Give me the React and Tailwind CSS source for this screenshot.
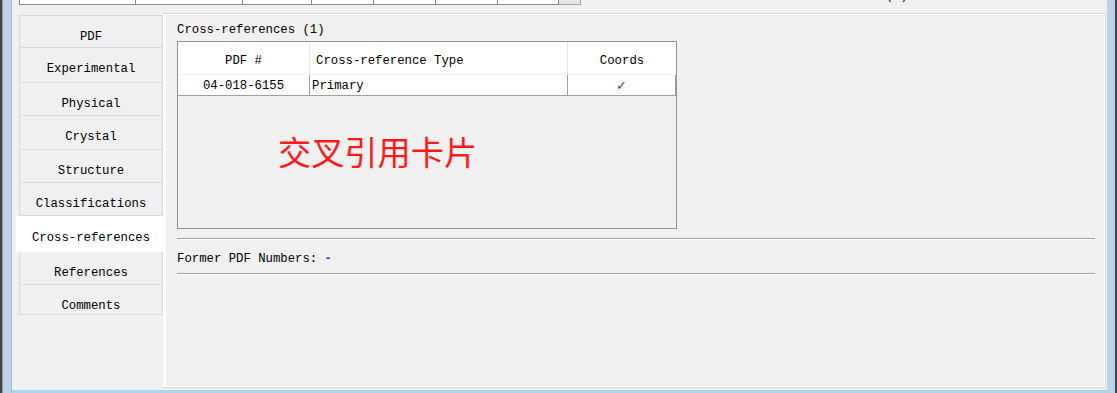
import React from "react";

const mono = { fontFamily: '"Liberation Mono", "DejaVu Sans Mono", monospace' };

const tabs = [
  { label: "PDF", h: "h-[33px]" },
  { label: "Experimental", h: "h-[35px]" },
  { label: "Physical", h: "h-[33px]" },
  { label: "Crystal", h: "h-[34px]" },
  { label: "Structure", h: "h-[33px]" },
  { label: "Classifications", h: "h-[33px]" },
  { label: "Cross-references", h: "h-[36px]", active: true },
  { label: "References", h: "h-[33px]" },
  { label: "Comments", h: "h-[30px]" },
];

const topCells = [
  { w: "w-[116px]", t: "27.006" },
  { w: "w-[107px]", t: "2.89660" },
  { w: "w-[69px]", t: "0" },
  { w: "w-[62px]", t: "1" },
  { w: "w-[62px]", t: "1" },
  { w: "w-[62px]", t: "1" },
  { w: "w-[61px]", t: "" },
];

export default function App() {
  return (
    <div
      className="w-[1117px] h-[393px] flex bg-[#f0f0f0] overflow-hidden text-black"
      style={mono}
    >
      {/* left window frame */}
      <div className="w-[2px] h-full bg-[#444444]" />
      <div className="w-[1px] h-full bg-[#9a9a9a]" />
      <div className="w-[8px] h-full bg-[#bcd3ea]" />
      <div className="w-[1px] h-full bg-[#a9bfd6]" />

      {/* main column */}
      <div className="flex-1 flex flex-col min-w-0">
        {/* clipped top table strip */}
        <div className="h-[13px] flex items-start pl-[7px] relative">
          <div className="flex h-[5px] border-l border-b border-[#8a8a8a] bg-white overflow-hidden">
            {topCells.map((c, i) => (
              <div
                key={i}
                className={`${c.w} h-full border-r border-[#8a8a8a] flex justify-end pr-[4px] overflow-hidden`}
              >
                <span className="text-[12.3px] leading-[14px] -mt-[11px] text-[#222]">{c.t}</span>
              </div>
            ))}
          </div>
          <div className="w-[22px] h-[5px] border-r border-b border-[#a8a8a8] bg-[#e6e6e6]" />
          <div className="flex-1" />
          <div className="w-[260px] h-[5px] overflow-hidden">
            <span className="block text-[12.3px] leading-[14px] -mt-[11px] text-[#222] pl-[24px]">
              2θ(°)
            </span>
          </div>
        </div>

        {/* tab control */}
        <div className="flex-1 flex pl-[7px] min-h-0">
          {/* tab list */}
          <div className="w-[144px] mt-[2px] flex flex-col">
            {tabs.map((t) =>
              t.active ? (
                <div
                  key={t.label}
                  className={`${t.h} -ml-[3px] -mr-[3px] relative z-10 bg-white flex justify-center pt-[15px] text-[12.3px] leading-[14px]`}
                >
                  {t.label}
                </div>
              ) : (
                <div
                  key={t.label}
                  className={`${t.h} border-l border-r border-b border-[#dcdcdc] first:border-t bg-[#f0f0f0] flex justify-center pt-[14px] text-[12.3px] leading-[14px]`}
                >
                  {t.label}
                </div>
              )
            )}
          </div>

          {/* panel */}
          <div className="flex-1 mr-[1px] border-t border-r border-b border-[#d6d6d6] flex min-w-0">
            <div className="flex-1 border-t border-l-[3px] border-r border-b border-white flex flex-col pl-[11px] pr-[9px] pt-[8px] min-w-0">
              <div className="text-[12.3px] leading-[14px]">Cross-references (1)</div>

              {/* table */}
              <div className="mt-[4px] w-[500px] h-[188px] border border-[#8e929a] flex flex-col">
                <div className="h-[33px] bg-white flex border-b border-[#f0f0f0] text-[12.3px] leading-[14px] pt-[5px]">
                  <div className="w-[132px] flex items-center justify-center border-r border-[#e5e5e5] -mt-[5px]">
                    <span className="pt-[6px]">PDF #</span>
                  </div>
                  <div className="w-[258px] flex items-center pl-[6px] border-r border-[#e5e5e5] -mt-[5px]">
                    <span className="pt-[6px]">Cross-reference Type</span>
                  </div>
                  <div className="flex-1 flex items-center justify-center -mt-[5px]">
                    <span className="pt-[6px]">Coords</span>
                  </div>
                </div>
                <div className="h-[21px] bg-white flex border-b border-[#a0a0a0] text-[12.3px] leading-[14px]">
                  <div className="w-[132px] flex items-center justify-center border-r border-[#a0a0a0]">
                    <span className="pt-[2px]">04-018-6155</span>
                  </div>
                  <div className="w-[258px] flex items-center pl-[2px] border-r border-[#a0a0a0]">
                    <span className="pt-[2px]">Primary</span>
                  </div>
                  <div
                    className="flex-1 flex items-center justify-center text-[13px] text-[#3a4660] border-r border-[#a0a0a0]"
                    style={{ fontFamily: '"DejaVu Sans", sans-serif' }}
                  >
                    <span className="pt-[2px]">✓</span>
                  </div>
                </div>
                <div className="flex-1 bg-[#f0f0f0] pl-[100px] pt-[38px]">
                  <span
                    className="text-[33.2px] leading-none text-[#ff1a1a]"
                    style={{ fontFamily: '"Noto Sans CJK SC", "Noto Sans", sans-serif' }}
                  >
                    交叉引用卡片
                  </span>
                </div>
              </div>

              <div className="mt-[9px] border-t border-[#a0a0a0] border-b border-b-white" />
              <div className="mt-[12px] text-[12.3px] leading-[14px] flex">
                <span>Former PDF Numbers:</span>
                <span className="ml-[7px] text-[#1a44c8] font-bold">-</span>
              </div>
              <div className="mt-[7px] border-t border-[#a0a0a0] border-b border-b-white" />
            </div>
          </div>
        </div>

        <div className="h-[2px]" />
        <div className="h-[3px] bg-[#a6d9ef]" />
      </div>

      {/* right window frame */}
      <div className="w-[8px] h-full bg-[#bcd3ea]" />
      <div className="w-[2px] h-full bg-[#444444]" />
    </div>
  );
}
